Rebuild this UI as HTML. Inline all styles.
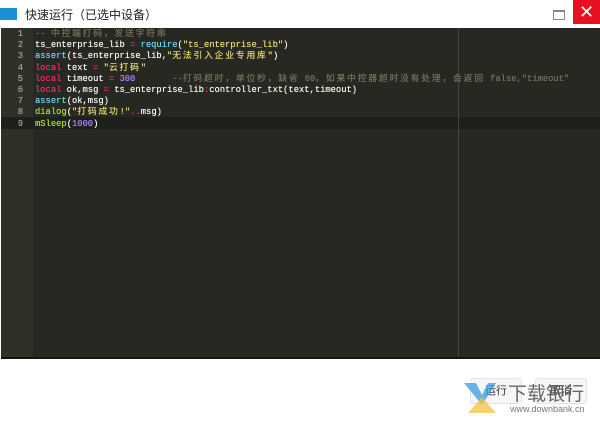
<!DOCTYPE html>
<html><head><meta charset="utf-8"><style>
body{margin:0;width:600px;height:423px;background:#fff;position:relative;overflow:hidden;font-family:"Liberation Sans","Noto Sans CJK SC",sans-serif}
.title{position:absolute;left:0;top:0;width:600px;height:28px;background:#fff}
.icon{position:absolute;left:0;top:8px;width:17px;height:12px;background:#1a8fd6}
.tt{position:absolute;left:25px;top:6px;font-size:12px;color:#222}
.max{position:absolute;left:553px;top:10px;width:10px;height:7px;border:1px solid #888;border-top-width:2px}
.close{position:absolute;left:573px;top:0;width:27px;height:24px;background:#e81123;color:#fff;font-size:18px;text-align:center;line-height:24px}
.ed{position:absolute;left:1px;top:28px;width:599px;height:329px;background:#272822;border-bottom:2px solid #151512}
.gut{position:absolute;left:0;top:0;width:32px;height:329px;background:#2f3129}
.vl{position:absolute;left:457px;top:0;width:1px;height:329px;background:#444}
.hl{position:absolute;left:0;top:89px;width:599px;height:12px;background:#1e1f1b}
pre{margin:0;position:absolute;top:1px;font-family:"Liberation Mono","Noto Sans CJK SC",monospace;font-size:8.8px;line-height:11.2px;text-shadow:0 0 0.4px currentColor}
.n{left:0;width:22px;text-align:right;color:#a0a19a}
.c{left:34px;color:#f8f8f2}
.z{letter-spacing:1.8px}
.k{color:#f92672}.f{color:#66d9ef}.s{color:#e6db74}.m{color:#ae81ff}.g{color:#75715e}.b{color:#a6e22e}
.btn{position:absolute;top:378px;width:50px;height:24px;border:1px solid #e4e4e4;background:#f6f6f6;border-radius:3px;font-size:11px;color:#333;text-align:center;line-height:24px}
.wm{position:absolute;left:508px;top:379px;font-size:19px;color:#666}
.wm2{position:absolute;left:510px;top:404px;font-size:9px;color:#777}
</style></head><body>
<div class="title"><div class="icon"></div><div class="tt">快速运行（已选中设备）</div><div class="max"></div><div class="close">✕</div></div>
<div class="ed"><div class="gut"></div><div class="hl"></div><div class="vl"></div>
<pre class="n">1
2
3
4
5
6
7
8
9</pre>
<pre class="c"><span class="g">-- <span class="z">中控端打码，发送字符串</span></span>
ts_enterprise_lib <span class="k">=</span> <span class="f">require</span>(<span class="s">"ts_enterprise_lib"</span>)
<span class="f">assert</span>(ts_enterprise_lib,<span class="s">"<span class="z">无法引入企业专用库</span>"</span>)
<span class="k">local</span> text <span class="k">=</span> <span class="s">"<span class="z">云打码</span>"</span>
<span class="k">local</span> timeout <span class="k">=</span> <span class="m">300</span>       <span class="g">--<span class="z">打码超时，单位秒，缺省</span> 60<span class="z">，如果中控器超时没有处理，会返回</span> false,"timeout"</span>
<span class="k">local</span> ok,msg <span class="k">=</span> ts_enterprise_lib<span class="k">:</span>controller_txt(text,timeout)
<span class="f">assert</span>(ok,msg)
<span class="b">dialog</span>(<span class="s">"<span class="z">打码成功</span>!"</span><span class="k">..</span>msg)
<span class="b">mSleep</span>(<span class="m">1000</span>)</pre>
</div>
<div class="btn" style="left:470px">运行</div>
<div class="btn" style="left:535px">取消</div>
<svg style="position:absolute;left:464px;top:383px" width="40" height="36"><polygon points="0,0 12,0 18,12 24,0 32,0 18,22" fill="#3a9be0" opacity="0.75"/><polygon points="4,30 18,14 32,30" fill="#f5c242" opacity="0.75"/></svg>
<div class="wm">下载银行</div>
<div class="wm2">www.downbank.cn</div>
</body></html>
